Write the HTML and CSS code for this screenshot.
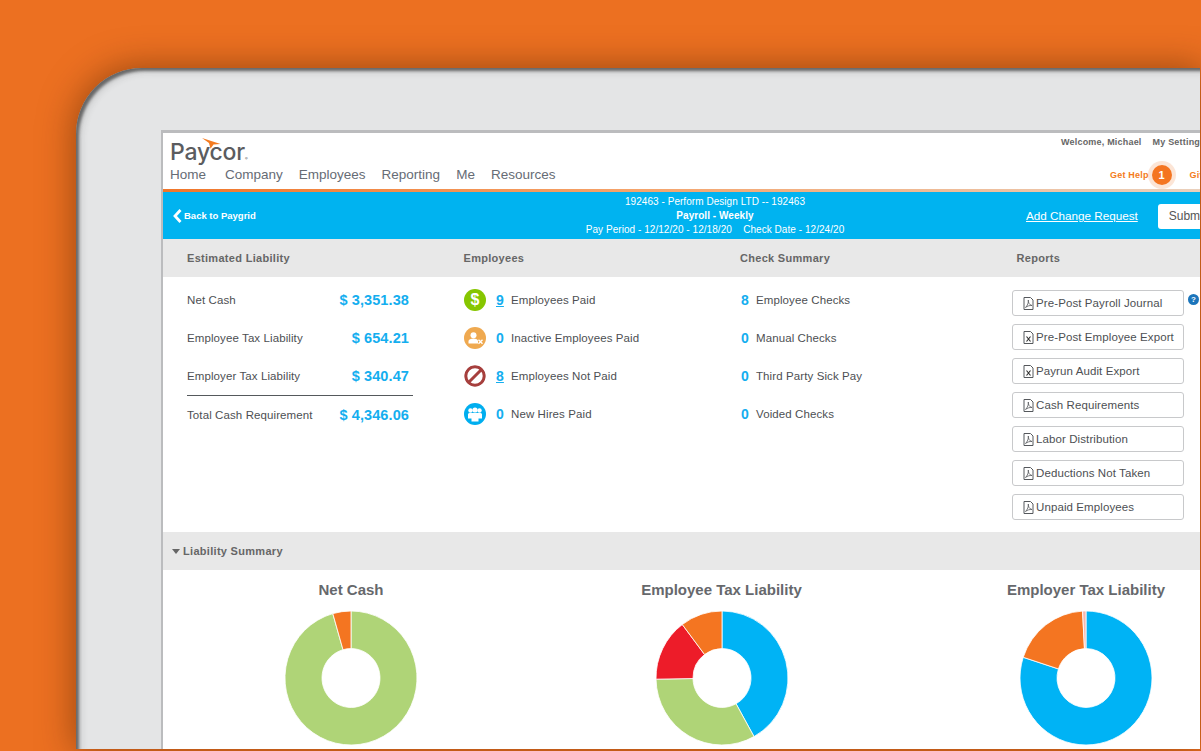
FILE: index.html
```html
<!DOCTYPE html>
<html lang="en">

<head>
    <meta charset="UTF-8">
    <meta name="viewport" content="width=device-width, initial-scale=1.0">
    <title>Paycor Payroll</title>
    <link rel="stylesheet" href="styles.css">
</head>

<body>
    <div class="device">
        <div class="screen">

            <header class="top">
                <div class="top-left">
                    <div class="logo">
                        <svg class="swoosh" viewBox="0 0 19 11"><path d="M0 0L18.500 6L11.500 6.500L8.500 10.800L7 5Z"/></svg>
                        <span>Paycor</span><span class="reg">®</span>
                    </div>
                    <nav class="nav">
                        <a class="nav-home">Home</a>
                        <a>Company</a>
                        <a>Employees</a>
                        <a>Reporting</a>
                        <a>Me</a>
                        <a>Resources</a>
                    </nav>
                </div>
                <div class="top-right">
                    <div class="user-links">
                        <span>Welcome, Michael</span>
                        <span>My Settings</span>
                    </div>
                    <div class="help-links">
                        <span class="get-help">Get Help</span>
                        <span class="badge">1</span>
                        <span class="give">Give Feedback</span>
                    </div>
                </div>
            </header>

            <div class="bluebar">
                <a class="back">
                    <svg viewBox="0 0 9 14"><path d="M7.500 1L2 7L7.500 13" /></svg>
                    Back to Paygrid
                </a>
                <div class="run-info">
                    <div>192463 - Perform Design LTD -- 192463</div>
                    <div class="run-name">Payroll - Weekly</div>
                    <div>Pay Period - 12/12/20 - 12/18/20 &nbsp;&nbsp; Check Date - 12/24/20</div>
                </div>
                <div class="bar-actions">
                    <a class="change-request">Add Change Request</a>
                    <button class="submit">Submit</button>
                </div>
            </div>

            <div class="section-head columns-head">
                <div>Estimated Liability</div>
                <div>Employees</div>
                <div>Check Summary</div>
                <div>Reports</div>
            </div>

            <div class="summary">
                <div class="liability">
                    <div class="row"><span>Net Cash</span><b>$ 3,351.38</b></div>
                    <div class="row"><span>Employee Tax Liability</span><b>$ 654.21</b></div>
                    <div class="row"><span>Employer Tax Liability</span><b>$ 340.47</b></div>
                    <div class="row total"><span>Total Cash Requirement</span><b>$ 4,346.06</b></div>
                </div>

                <div class="employees">
                    <div class="row">
                        <span class="status status-green">$</span>
                        <a class="count linked">9</a><span>Employees Paid</span>
                    </div>
                    <div class="row">
                        <span class="status status-tan">
                            <svg viewBox="0 0 22 22">
                                <circle cx="9.500" cy="8.300" r="3" fill="#fff"/>
                                <path d="M4.500 16.500V14C4.500 12.500 7 11.500 9.500 11.500C12 11.500 14 12.500 14 14V16.500Z" fill="#fff"/>
                                <path d="M14.500 12.800L18.500 16.800M18.500 12.800L14.500 16.800" stroke="#fff" stroke-width="1.400"/>
                            </svg>
                        </span>
                        <a class="count">0</a><span>Inactive Employees Paid</span>
                    </div>
                    <div class="row">
                        <span class="status status-none">
                            <svg viewBox="0 0 22 22">
                                <circle cx="11" cy="11" r="9.200" fill="#fff" stroke="#a63f3d" stroke-width="3"/>
                                <path d="M17 5L5 17" stroke="#a63f3d" stroke-width="3"/>
                            </svg>
                        </span>
                        <a class="count linked">8</a><span>Employees Not Paid</span>
                    </div>
                    <div class="row">
                        <span class="status status-blue">
                            <svg viewBox="0 0 22 22" fill="#fff">
                                <circle cx="6.500" cy="7.500" r="2.200"/>
                                <circle cx="15.500" cy="7.500" r="2.200"/>
                                <circle cx="11" cy="7" r="2.600"/>
                                <path d="M4 15.500V11.500C4 10.300 5 10 6.500 10H15.500C17 10 18 10.300 18 11.500V15.500Z"/>
                                <path d="M7.500 18.500V10.500H14.500V18.500Z"/>
                            </svg>
                        </span>
                        <a class="count">0</a><span>New Hires Paid</span>
                    </div>
                </div>

                <div class="checks">
                    <div class="row"><a class="count">8</a><span>Employee Checks</span></div>
                    <div class="row"><a class="count">0</a><span>Manual Checks</span></div>
                    <div class="row"><a class="count">0</a><span>Third Party Sick Pay</span></div>
                    <div class="row"><a class="count">0</a><span>Voided Checks</span></div>
                </div>

                <div class="reports">
                    <span class="help-dot">?</span>
                    <a class="report">
                        <svg class="file" viewBox="0 0 11 13"><path class="sheet" d="M1 .5H7.500L10 3V12.500H1Z"/><path class="mark" d="M2.500 10.500C4.500 8.500 5.800 5.500 5.300 3C5 5.500 6.500 8 9 8.500C6.500 8.300 4.500 9 2.500 10.500Z"/></svg>
                        Pre-Post Payroll Journal
                    </a>
                    <a class="report">
                        <svg class="file" viewBox="0 0 11 13"><path class="sheet" d="M1 .5H7.500L10 3V12.500H1Z"/><path class="mark mark-x" d="M3.500 5.500L7.500 10.500M7.500 5.500L3.500 10.500"/></svg>
                        Pre-Post Employee Export
                    </a>
                    <a class="report">
                        <svg class="file" viewBox="0 0 11 13"><path class="sheet" d="M1 .5H7.500L10 3V12.500H1Z"/><path class="mark mark-x" d="M3.500 5.500L7.500 10.500M7.500 5.500L3.500 10.500"/></svg>
                        Payrun Audit Export
                    </a>
                    <a class="report">
                        <svg class="file" viewBox="0 0 11 13"><path class="sheet" d="M1 .5H7.500L10 3V12.500H1Z"/><path class="mark" d="M2.500 10.500C4.500 8.500 5.800 5.500 5.300 3C5 5.500 6.500 8 9 8.500C6.500 8.300 4.500 9 2.500 10.500Z"/></svg>
                        Cash Requirements
                    </a>
                    <a class="report">
                        <svg class="file" viewBox="0 0 11 13"><path class="sheet" d="M1 .5H7.500L10 3V12.500H1Z"/><path class="mark" d="M2.500 10.500C4.500 8.500 5.800 5.500 5.300 3C5 5.500 6.500 8 9 8.500C6.500 8.300 4.500 9 2.500 10.500Z"/></svg>
                        Labor Distribution
                    </a>
                    <a class="report">
                        <svg class="file" viewBox="0 0 11 13"><path class="sheet" d="M1 .5H7.500L10 3V12.500H1Z"/><path class="mark" d="M2.500 10.500C4.500 8.500 5.800 5.500 5.300 3C5 5.500 6.500 8 9 8.500C6.500 8.300 4.500 9 2.500 10.500Z"/></svg>
                        Deductions Not Taken
                    </a>
                    <a class="report">
                        <svg class="file" viewBox="0 0 11 13"><path class="sheet" d="M1 .5H7.500L10 3V12.500H1Z"/><path class="mark" d="M2.500 10.500C4.500 8.500 5.800 5.500 5.300 3C5 5.500 6.500 8 9 8.500C6.500 8.300 4.500 9 2.500 10.500Z"/></svg>
                        Unpaid Employees
                    </a>
                </div>
            </div>

            <div class="section-head liability-head">
                <span class="caret"></span>Liability Summary
            </div>

            <div class="charts">
                <div class="chart">
                    <h3>Net Cash</h3>
                    <svg class="donut" viewBox="-67 -67 134 134" preserveAspectRatio="none">
                        <path class="s-green" d="M0 -66A66 66 0 1 1 -18.190 -63.450L-7.990 -27.880A29 29 0 1 0 0 -29Z"/>
                        <path class="s-orange" d="M-18.190 -63.450A66 66 0 0 1 0 -66L0 -29A29 29 0 0 0 -7.990 -27.880Z"/>
                    </svg>
                </div>
                <div class="chart">
                    <h3>Employee Tax Liability</h3>
                    <svg class="donut" viewBox="-67 -67 134 134" preserveAspectRatio="none">
                        <path class="s-blue" d="M0 -66A66 66 0 0 1 32 57.720L14.060 25.360A29 29 0 0 0 0 -29Z"/>
                        <path class="s-green" d="M32 57.720A66 66 0 0 1 -65.990 1.150L-29 .510A29 29 0 0 0 14.060 25.360Z"/>
                        <path class="s-red" d="M-65.990 1.150A66 66 0 0 1 -39.720 -52.710L-17.450 -23.160A29 29 0 0 0 -29 .510Z"/>
                        <path class="s-orange" d="M-39.720 -52.710A66 66 0 0 1 0 -66L0 -29A29 29 0 0 0 -17.450 -23.160Z"/>
                    </svg>
                </div>
                <div class="chart">
                    <h3>Employer Tax Liability</h3>
                    <svg class="donut" viewBox="-67 -67 134 134" preserveAspectRatio="none">
                        <path class="s-blue" d="M0 -66A66 66 0 1 1 -62.770 -20.390L-27.580 -8.960A29 29 0 1 0 0 -29Z"/>
                        <path class="s-orange" d="M-62.770 -20.390A66 66 0 0 1 -3.450 -65.910L-1.520 -28.960A29 29 0 0 0 -27.580 -8.960Z"/>
                        <path class="s-pink" d="M-3.450 -65.910A66 66 0 0 1 0 -66L0 -29A29 29 0 0 0 -1.520 -28.960Z"/>
                    </svg>
                </div>
            </div>

        </div>
    </div>
</body>

</html>
```

FILE: styles.css
```css
* {
    box-sizing: border-box;
}

html,
body {
    height: 100%;
}

body {
    margin: 0;
    padding: 68px 1px 2px 76px;
    overflow: hidden;
    background-color: #ec7021;
    font-family: "Liberation Sans", Arial, sans-serif;
    color: #555a60;
}

a {
    color: inherit;
    text-decoration: none;
}

.device {
    height: 100%;
    padding: 62px 0 0 85px;
    background-color: #e4e5e6;
    border-radius: 66px 0 0 0;
    box-shadow: 0 0 34px 2px rgba(80, 35, 0, .5), inset 3px 3px 3px rgba(40, 40, 40, .62), inset 6px 5px 6px rgba(60, 60, 60, .12);
}

.screen {
    height: 100%;
    overflow: hidden;
    background-color: #fff;
    border-top: 3px solid #bbbcbe;
    border-left: 2px solid #bbbcbe;
}

/* header */
.top {
    display: flex;
    height: 56px;
}

.top-left {
    flex: none;
    width: 898px;
    padding-left: 7px;
}

.logo {
    position: relative;
    height: 31px;
    padding-top: 6px;
    font-family: Inter, sans-serif;
    font-size: 23px;
    font-weight: 500;
    line-height: 27px;
    letter-spacing: -.2px;
    color: #5b5c5f;
}

.reg {
    font-size: 4px;
    letter-spacing: 0;
}

.swoosh {
    position: absolute;
    left: 32px;
    top: 5px;
    width: 19px;
    height: 11px;
    fill: #f47b20;
}

.nav {
    display: flex;
    gap: 16px;
    height: 22px;
    font-size: 13.500px;
    line-height: 22px;
    color: #666c75;
}

.nav-home {
    margin-right: 3px;
}

.top-right {
    flex: none;
    font-size: 9px;
    font-weight: bold;
    white-space: nowrap;
}

.user-links {
    display: flex;
    gap: 11px;
    height: 18px;
    padding-top: 4px;
    line-height: 11px;
    letter-spacing: .2px;
    color: #666;
}

.help-links {
    display: flex;
    align-items: center;
    height: 35px;
    margin-left: 49px;
    padding-top: 13px;
    color: #f47b20;
    letter-spacing: .2px;
}

.badge {
    width: 20px;
    height: 20px;
    margin: 0 18px 0 3px;
    border-radius: 50%;
    background-color: #f47521;
    box-shadow: 0 0 0 4px rgba(244, 150, 90, .25);
    color: #fff;
    font-size: 11px;
    line-height: 20px;
    text-align: center;
}

/* blue bar */
.bluebar {
    display: grid;
    grid-template-columns: 345px 414px auto;
    align-items: center;
    height: 50px;
    border-top: 3px solid;
    border-image: linear-gradient(to right, #f0762a, #f5a36a 45%, #ead0bc) 1;
    background-color: #00b3f0;
    color: #fff;
}

.back {
    display: flex;
    align-items: center;
    gap: 2px;
    padding-left: 10px;
    font-size: 9.500px;
    font-weight: bold;
}

.back svg {
    width: 9px;
    height: 14px;
    fill: none;
    stroke: #fff;
    stroke-width: 2.800;
}

.run-info {
    font-size: 10px;
    line-height: 14px;
    letter-spacing: .05px;
    text-align: center;
    white-space: nowrap;
}

.run-name {
    font-weight: bold;
}

.bar-actions {
    display: flex;
    align-items: center;
    gap: 20px;
    padding-left: 104px;
    white-space: nowrap;
}

.change-request {
    font-size: 11.700px;
    text-decoration: underline;
}

.submit {
    flex: none;
    width: 70px;
    height: 25px;
    margin-top: 1px;
    padding: 0 0 0 11px;
    border: 0;
    border-radius: 3px;
    background-color: #fff;
    font: 12px "Liberation Sans", Arial, sans-serif;
    color: #555;
    text-align: left;
}

/* section headers */
.section-head {
    height: 38px;
    background-color: #e8e8e8;
    font-size: 11px;
    font-weight: bold;
    line-height: 38px;
    letter-spacing: .3px;
    color: #666;
}

.columns-head {
    display: grid;
    grid-template-columns: repeat(4, 276.500px);
    padding-left: 24px;
    white-space: nowrap;
}

.liability-head {
    display: flex;
    align-items: center;
    gap: 3px;
    padding-left: 9px;
}

.caret {
    border: 4px solid transparent;
    border-top: 5px solid #666;
    border-bottom: 0;
}

/* summary columns */
.summary {
    display: grid;
    grid-template-columns: 301px 277px 271px 188px;
    height: 255px;
    font-size: 11.500px;
    letter-spacing: .1px;
    color: #4d4f53;
}

.row {
    display: flex;
    align-items: center;
    height: 38px;
}

.liability {
    padding: 4px 51px 0 24px;
}

.liability .row {
    justify-content: space-between;
    padding-right: 4px;
}

.liability b {
    font-size: 14.500px;
    color: #14aeef;
}

.total {
    border-top: 1px solid #55595c;
}

.employees,
.checks {
    padding-top: 4px;
}

.count {
    width: 15px;
    font-size: 14px;
    font-weight: bold;
    color: #14aeef;
}

.linked {
    text-decoration: underline;
}

.status {
    flex: none;
    width: 22px;
    height: 22px;
    margin-right: 10px;
    border-radius: 50%;
    overflow: hidden;
    color: #fff;
    font-size: 16px;
    font-weight: bold;
    line-height: 22px;
    text-align: center;
}

.status svg {
    display: block;
    width: 22px;
    height: 22px;
}

.status-green {
    background-color: #86c600;
}

.status-tan {
    background-color: #efa950;
}

.status-blue {
    background-color: #00aeef;
}

.reports {
    position: relative;
    display: flex;
    flex-direction: column;
    gap: 8px;
    width: 172px;
    padding-top: 13px;
}

.report {
    display: flex;
    align-items: center;
    gap: 2px;
    height: 26px;
    padding-left: 10px;
    border: 1px solid #c8c9cb;
    border-radius: 3px;
    white-space: nowrap;
}

.file {
    flex: none;
    width: 11px;
    height: 13px;
    fill: none;
}

.sheet {
    stroke: #55585c;
}

.mark {
    stroke: #55585c;
    stroke-width: .8;
}

.mark-x {
    stroke: #333;
    stroke-width: 1.200;
}

.help-dot {
    position: absolute;
    left: 176px;
    top: 17px;
    width: 11px;
    height: 11px;
    border-radius: 50%;
    background-color: #1b75bb;
    color: #fff;
    font-size: 8px;
    font-weight: bold;
    line-height: 11px;
    letter-spacing: 0;
    text-align: center;
}

/* charts */
.charts {
    display: grid;
    grid-template-columns: 376px 365px 364px;
    padding-top: 11px;
}

.chart h3 {
    margin: 0;
    height: 29px;
    font-size: 15px;
    line-height: 18px;
    text-align: center;
    color: #66686c;
    white-space: nowrap;
}

.donut {
    display: block;
    width: 134px;
    height: 136px;
    margin: 0 auto;
}

.donut path {
    stroke: #fff;
    stroke-width: .8;
}

.s-green {
    fill: #afd477;
}

.s-orange {
    fill: #f47521;
}

.s-red {
    fill: #ed1c29;
}

.s-blue {
    fill: #00b3f5;
}

.s-pink {
    fill: #f6b8b0;
}
```
